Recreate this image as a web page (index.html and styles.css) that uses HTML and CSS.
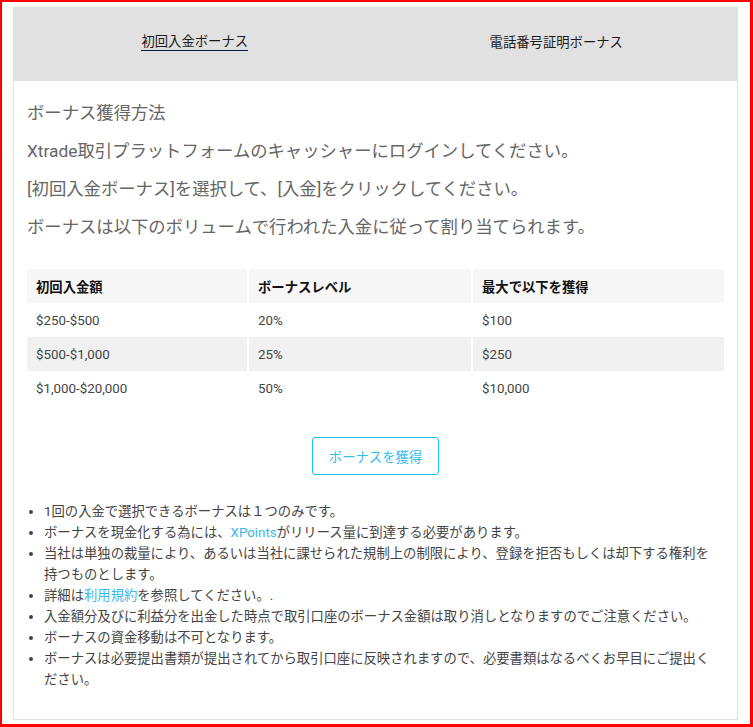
FILE: index.html
```html
<!DOCTYPE html>
<html lang="ja">
<head>
  <meta charset="UTF-8" />
  <meta name="viewport" content="width=device-width, initial-scale=1.0"/>
  <title>ボーナス</title>
  <link rel="stylesheet" href="styles.css">
</head>
<body>

<div class="frame">
  <div class="card">

    <!-- タブ -->
    <div class="tabs">
      <div class="tab active"><span>初回入金ボーナス</span></div>
      <div class="tab"><span>電話番号証明ボーナス</span></div>
    </div>

    <div class="content">
      <p class="lead">ボーナス獲得方法</p>
      <p class="lead">Xtrade取引プラットフォームのキャッシャーにログインしてください。</p>
      <p class="lead">[初回入金ボーナス]を選択して、[入金]をクリックしてください。</p>
      <p class="lead">ボーナスは以下のボリュームで行われた入金に従って割り当てられます。</p>

      <table class="bonus-table">
        <thead>
          <tr>
            <th class="col1">初回入金額</th>
            <th class="col2">ボーナスレベル</th>
            <th>最大で以下を獲得</th>
          </tr>
        </thead>
        <tbody>
          <tr>
            <td>$250-$500</td>
            <td>20%</td>
            <td>$100</td>
          </tr>
          <tr>
            <td>$500-$1,000</td>
            <td>25%</td>
            <td>$250</td>
          </tr>
          <tr>
            <td>$1,000-$20,000</td>
            <td>50%</td>
            <td>$10,000</td>
          </tr>
        </tbody>
      </table>

      <div class="btn-row">
        <button class="btn">ボーナスを獲得</button>
      </div>

      <ul class="notes">
        <li>1回の入金で選択できるボーナスは１つのみです。</li>
        <li>ボーナスを現金化する為には、<a href="#">XPoints</a>がリリース量に到達する必要があります。</li>
        <li>当社は単独の裁量により、あるいは当社に課せられた規制上の制限により、登録を拒否もしくは却下する権利を持つものとします。</li>
        <li>詳細は<a href="#">利用規約</a>を参照してください。.</li>
        <li>入金額分及びに利益分を出金した時点で取引口座のボーナス金額は取り消しとなりますのでご注意ください。</li>
        <li>ボーナスの資金移動は不可となります。</li>
        <li>ボーナスは必要提出書類が提出されてから取引口座に反映されますので、必要書類はなるべくお早目にご提出ください。</li>
      </ul>
    </div>

  </div>
</div>

</body>
</html>
```

FILE: styles.css
```css
html, body {
  margin: 0;
  padding: 0;
  background: #fff;
  font-family: Roboto, "Noto Sans CJK JP", sans-serif;
}

.frame {
  box-sizing: border-box;
  height: 727px;
  border: 2px solid #f00;
  border-right-width: 3px;
  border-bottom-width: 3px;
  padding: 5px 12px 0 11px;
}

.card {
  border: 1px solid #e0e0e0;
  background: #fff;
}

/* タブ */
.tabs {
  display: flex;
  height: 73px;
  background: #e1e1e1;
}

.tab {
  flex: 1;
  display: flex;
  align-items: center;
  justify-content: center;
  padding-bottom: 4px;
  font-size: 13.33px;
  color: #1b1b1b;
}

.tab span {
  line-height: 16px;
}

.tab.active span {
  border-bottom: 1px solid #0b1d3a;
}

.content {
  padding: 20px 13px 29px;
}

.lead {
  margin: 0 0 14px;
  font-size: 17.33px;
  line-height: 24px;
  color: #666;
}

/* テーブル */
.bonus-table {
  width: 100%;
  margin-top: 30px;
  border-collapse: collapse;
  font-size: 13.33px;
}

.bonus-table th,
.bonus-table td {
  height: 34px;
  padding: 0 9px;
  text-align: left;
  border-right: 2px solid #fff;
  box-sizing: border-box;
}

.bonus-table th:last-child,
.bonus-table td:last-child {
  border-right: none;
}

.bonus-table th {
  background: #f7f7f7;
  color: #111;
  font-weight: bold;
}

.bonus-table td {
  color: #444;
}

.bonus-table tbody tr:nth-child(2) td {
  background: #f1f1f1;
}

.col1 { width: 221px; }
.col2 { width: 224px; }

.btn-row {
  display: flex;
  justify-content: center;
  margin-top: 32px;
}

.btn {
  height: 38px;
  padding: 0 16px;
  background: #fff;
  border: 1px solid #1ec4f4;
  border-radius: 3px;
  color: #35bdf0;
  font-family: Roboto, "Noto Sans CJK JP", sans-serif;
  font-size: 13.33px;
  cursor: pointer;
}

/* 注意事項 */
.notes {
  margin: 26px 0 0;
  padding: 0 8px 0 17px;
  font-size: 13.33px;
  line-height: 21px;
  color: #444;
}

.notes a {
  color: #38b8ef;
  text-decoration: none;
}
```
